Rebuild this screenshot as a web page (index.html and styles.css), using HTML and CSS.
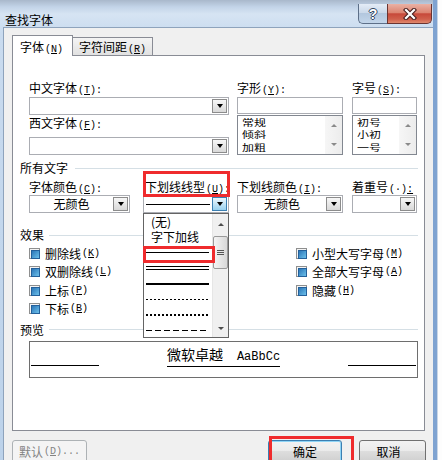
FILE: index.html
```html
<!DOCTYPE html>
<html lang="zh-CN">
<head>
  <meta charset="UTF-8" />
  <title>查找字体</title>
  <link rel="stylesheet" href="styles.css">
</head>
<body>
  <div class="screen">
    <div class="window">
      <div class="titlebar">
        <span class="title">查找字体</span>
        <div class="caption">
          <div class="cap help"><span>?</span></div>
          <div class="cap close">
            <svg width="14" height="12" viewBox="0 0 14 12">
              <path d="M3 2 L11 10 M11 2 L3 10" stroke="#4a2020" stroke-width="4.4" stroke-linecap="square" fill="none"/>
              <path d="M3 2 L11 10 M11 2 L3 10" stroke="#fff" stroke-width="2.2" stroke-linecap="square" fill="none"/>
            </svg>
          </div>
        </div>
      </div>

      <div class="client">
        <div class="tabs">
          <div class="tab active">字体<span class="key">(<u>N</u>)</span></div>
          <div class="tab">字符间距<span class="key">(<u>R</u>)</span></div>
        </div>

        <div class="panel">
          <!-- font name / style / size -->
          <div class="fonts">
            <div class="col-name">
              <span class="lbl">中文字体<span class="key">(<u>T</u>):</span></span>
              <div class="combo"><span class="val"></span><span class="drop"></span></div>
              <span class="lbl lbl-second">西文字体<span class="key">(<u>F</u>):</span></span>
              <div class="combo combo-low"><span class="val"></span><span class="drop"></span></div>
            </div>
            <div class="col-style">
              <span class="lbl">字形<span class="key">(<u>Y</u>):</span></span>
              <div class="textbox"></div>
              <div class="listbox">
                <div class="items">
                  <div>常规</div>
                  <div>倾斜</div>
                  <div>加粗</div>
                </div>
                <div class="vscroll"><span class="up"></span><span class="down"></span></div>
              </div>
            </div>
            <div class="col-size">
              <span class="lbl">字号<span class="key">(<u>S</u>):</span></span>
              <div class="textbox"></div>
              <div class="listbox">
                <div class="items">
                  <div>初号</div>
                  <div>小初</div>
                  <div>一号</div>
                </div>
                <div class="vscroll"><span class="up"></span><span class="down"></span></div>
              </div>
            </div>
          </div>

          <div class="group group-all">所有文字</div>
          <div class="attrs">
            <div class="attr-color">
              <span class="lbl">字体颜色<span class="key">(<u>C</u>):</span></span>
              <div class="combo combo-attr"><span class="val">无颜色</span><span class="drop"></span></div>
            </div>
            <div class="attr-line">
              <span class="lbl lbl-line">下划线线型<span class="key">(<u>U</u>):</span></span>
              <div class="combo combo-attr combo-open"><span class="val"><span class="sample"></span></span><span class="drop drop-hot"></span></div>
            </div>
            <div class="attr-ucolor">
              <span class="lbl">下划线颜色<span class="key">(<u>I</u>):</span></span>
              <div class="combo combo-attr"><span class="val">无颜色</span><span class="drop"></span></div>
            </div>
            <div class="attr-emph">
              <span class="lbl">着重号<span class="key">(·)<u>:</u></span></span>
              <div class="combo combo-attr"><span class="val"></span><span class="drop"></span></div>
            </div>
          </div>

          <div class="group group-fx">效果</div>
          <div class="effects">
            <div class="fx-col">
              <div class="check"><span class="box"></span>删除线<span class="key">(<u>K</u>)</span></div>
              <div class="check"><span class="box"></span>双删除线<span class="key">(<u>L</u>)</span></div>
              <div class="check"><span class="box"></span>上标<span class="key">(<u>P</u>)</span></div>
              <div class="check"><span class="box"></span>下标<span class="key">(<u>B</u>)</span></div>
            </div>
            <div class="fx-col fx-right">
              <div class="check"><span class="box"></span>小型大写字母<span class="key">(<u>M</u>)</span></div>
              <div class="check"><span class="box"></span>全部大写字母<span class="key">(<u>A</u>)</span></div>
              <div class="check"><span class="box"></span>隐藏<span class="key">(<u>H</u>)</span></div>
            </div>
          </div>

          <div class="group group-preview">预览</div>
          <div class="preview">
            <span class="rule"></span>
            <span class="sample-text">微软卓越<span class="latin">AaBbCc</span></span>
            <span class="rule"></span>
          </div>

          <!-- open underline style list -->
          <div class="popup">
            <div class="popup-list">
              <div class="opt"><span class="opt-text">(无)</span></div>
              <div class="opt"><span class="opt-text">字下加线</span></div>
              <div class="opt"><span class="stroke solid"></span></div>
              <div class="opt"><span class="stroke double"></span></div>
              <div class="opt"><span class="stroke thick"></span></div>
              <div class="opt"><span class="stroke fine-dash"></span></div>
              <div class="opt"><span class="stroke dots"></span></div>
              <div class="opt"><span class="stroke long-dash"></span></div>
            </div>
            <div class="popup-scroll">
              <span class="sb-btn"><span class="up"></span></span>
              <span class="thumb"><span class="grip"></span></span>
              <span class="sb-btn sb-bottom"><span class="down"></span></span>
            </div>
          </div>

          <div class="mark mark-label"></div>
          <div class="mark mark-item"></div>
        </div>

        <div class="buttons">
          <div class="btn btn-off">默认<span class="key">(<u>D</u>)...</span></div>
          <div class="btn btn-ok">确定</div>
          <div class="btn btn-cancel">取消</div>
          <div class="mark mark-ok"></div>
        </div>
      </div>
    </div>
    <div class="behind"></div>
  </div>
</body>
</html>
```

FILE: styles.css
```css
* {
  box-sizing: border-box;
}
body {
  margin: 0;
  width: 442px;
  height: 460px;
  overflow: hidden;
  background: #fff;
  color: #000;
  font-family: "Noto Sans CJK SC", "Liberation Sans", sans-serif;
  font-size: 12px;
}
.screen {
  display: flex;
  height: 460px;
}
.window {
  width: 437px;
  flex: none;
  display: flex;
  flex-direction: column;
  padding-left: 3px;
  border-right: 4px solid #7fa3d1;
  background: linear-gradient(180deg, #a9b8cb 0, #c3d4e8 7px, #d6e4f3 14px, #c9dbef 33px, #bcd2ea 100%);
}
.behind {
  flex: 1;
  background: #fdfdfd;
  border-left: 1px solid #c9d6e6;
}

/* title bar */
.titlebar {
  height: 33px;
  display: flex;
  align-items: flex-start;
  padding: 0 1px 0 2px;
}
.title {
  margin-top: 13px;
  line-height: 14px;
}
.caption {
  margin-left: auto;
  margin-top: 4px;
  display: flex;
}
.cap {
  height: 20px;
  display: flex;
  align-items: center;
  justify-content: center;
  border: 1px solid #5d6f88;
  border-top: none;
}
.help {
  width: 29px;
  border-right: none;
  border-bottom-left-radius: 5px;
  background: linear-gradient(180deg, #e4ecf6 0, #cbd9ea 45%, #b3c7de 50%, #c2d5ea 100%);
}
.help span {
  font-family: "Liberation Sans", sans-serif;
  font-weight: bold;
  font-size: 14px;
  color: #fff;
  text-shadow: 1px 0 #34465f, -1px 0 #34465f, 0 1px #34465f, 0 -1px #34465f;
}
.close {
  width: 45px;
  border-color: #6a3431;
  border-bottom-right-radius: 5px;
  background: linear-gradient(180deg, #eab1a4 0, #dc8572 45%, #c7493a 52%, #d0604c 80%, #e0896e 100%);
}

/* client area */
.client {
  flex: 1;
  background: #f0f0f0;
  border-left: 1px solid #8ea3bc;
  border-top: 1px solid #8ea3bc;
  padding: 7px 8px 0 8px;
}
.key {
  font-family: "Liberation Mono", monospace;
  font-size: 10px;
  margin-left: 1px;
}
.tabs {
  display: flex;
  align-items: flex-end;
  height: 20px;
  position: relative;
  z-index: 1;
}
.tab {
  width: 80px;
  height: 18px;
  border: 1px solid #898c95;
  border-left: none;
  border-bottom: none;
  padding: 2px 0 0 6px;
  line-height: 14px;
  background: linear-gradient(180deg, #f4f4f4, #e1e1e1);
}
.tab.active {
  width: 61px;
  height: 21px;
  margin-bottom: -1px;
  border-left: 1px solid #898c95;
  padding: 4px 0 0 7px;
  background: #fff;
}
.panel {
  position: relative;
  height: 376px;
  border: 1px solid #898c95;
  background: #fff;
  padding: 25px 6px 0 7px;
}
.lbl {
  display: block;
  height: 14px;
  line-height: 14px;
  white-space: nowrap;
}

/* font name/style/size */
.fonts {
  display: flex;
  margin-left: 9px;
}
.col-name {
  width: 200px;
  flex: none;
}
.col-style {
  width: 106px;
  flex: none;
  margin-left: 8px;
}
.col-size {
  width: 65px;
  flex: none;
  margin-left: 9px;
}
.lbl-second {
  margin-top: 1px;
}
.combo {
  height: 18px;
  margin-top: 2px;
  border: 1px solid #abadb3;
  background: #fff;
  display: flex;
  align-items: center;
}
.combo-low {
  margin-top: 7px;
}
.combo-attr {
  margin-top: 1px;
}
.combo .val {
  flex: 1;
  line-height: 14px;
  text-align: center;
}
.drop {
  width: 15px;
  height: 14px;
  margin-right: 1px;
  border: 1px solid #8c8c8c;
  background: linear-gradient(180deg, #f7f7f7, #d9d9d9);
  display: flex;
  align-items: center;
  justify-content: center;
}
.drop::after {
  content: "";
  border-left: 3px solid transparent;
  border-right: 3px solid transparent;
  border-top: 4px solid #000;
}
.drop-hot {
  border-color: #3c7fb1;
  background: linear-gradient(180deg, #eaf6fd, #c4e5f6 50%, #98d1ef);
}
.combo-open .val {
  display: flex;
  padding-left: 2px;
}
.sample {
  width: 64px;
  height: 1px;
  background: #000;
}
.textbox {
  height: 17px;
  margin-top: 2px;
  border: 1px solid #abadb3;
}
.listbox {
  height: 40px;
  margin-top: 1px;
  border: 1px solid #828790;
  display: flex;
  overflow: hidden;
}
.listbox .items {
  flex: 1;
  padding: 0 0 0 4px;
  line-height: 17px;
  transform: scaleY(0.72);
  transform-origin: 0 0;
}
.vscroll {
  width: 17px;
  background: linear-gradient(90deg, #f6f6f6, #ececec);
  display: flex;
  flex-direction: column;
  justify-content: space-around;
  align-items: center;
}
.up, .down {
  width: 0;
  height: 0;
  border-left: 3px solid transparent;
  border-right: 3px solid transparent;
}
.up {
  border-bottom: 3px solid #8a8a8a;
}
.down {
  border-top: 3px solid #8a8a8a;
}

/* group headers */
.group {
  display: flex;
  align-items: center;
  height: 14px;
  line-height: 14px;
}
.group::after {
  content: "";
  flex: 1;
  height: 1px;
  margin-left: 7px;
  background: #d5dfe5;
}
.group-all {
  margin-top: 6px;
}
.group-fx {
  margin-top: 15px;
}
.group-fx::after {
  margin-left: 5px;
}
.group-preview {
  margin-top: 4.5px;
}
.group-preview::after {
  margin-left: 5px;
}

/* all text row */
.attrs {
  display: flex;
  margin: 5px 0 0 9px;
}
.attr-color {
  width: 101px;
  flex: none;
}
.attr-line {
  width: 86px;
  flex: none;
  margin-left: 13px;
}
.lbl-line {
  padding-left: 2px;
}
.attr-ucolor {
  width: 106px;
  flex: none;
  margin-left: 8px;
}
.attr-emph {
  width: 65px;
  flex: none;
  margin-left: 9px;
}

/* effects */
.effects {
  display: flex;
  margin: 2px 0 0 9px;
}
.fx-col {
  width: 267px;
  flex: none;
}
.fx-right {
  width: auto;
  flex: 1;
}
.check {
  display: flex;
  align-items: center;
  height: 18.5px;
  white-space: nowrap;
}
.box {
  width: 11px;
  height: 11px;
  margin-right: 5px;
  border: 1px solid #8e8f8f;
  padding: 1px;
  background: #f4f4f4;
}
.box::after {
  content: "";
  display: block;
  width: 7px;
  height: 7px;
  border: 1px solid #24609a;
  background: linear-gradient(135deg, #2b76b8, #6cc0ea);
}

/* preview */
.preview {
  height: 37px;
  margin: 4.5px 0 0 9px;
  border: 1px solid #6e6e6e;
  display: flex;
  align-items: flex-end;
  justify-content: space-between;
  padding: 0 1px 11px 1px;
}
.rule {
  width: 68px;
  height: 1px;
  background: #000;
}
.sample-text {
  font-size: 14px;
  line-height: 14px;
  padding-bottom: 2px;
  border-bottom: 1px solid #000;
  margin-bottom: -1px;
}
.latin {
  font-family: "Liberation Mono", monospace;
  font-size: 12px;
  margin-left: 14px;
}

/* open underline list */
.popup {
  position: absolute;
  left: 130px;
  top: 157px;
  width: 86px;
  height: 125px;
  border: 1px solid #646464;
  background: #fff;
  display: flex;
  z-index: 2;
}
.popup-list {
  flex: 1;
  overflow: hidden;
}
.opt {
  height: 15.5px;
  display: flex;
  align-items: center;
  padding-left: 2px;
}
.opt-text {
  padding-left: 5px;
  line-height: 14px;
  white-space: nowrap;
}
.stroke {
  width: 63px;
}
.solid {
  height: 1px;
  background: #000;
}
.double {
  height: 4px;
  border-top: 1px solid #000;
  border-bottom: 1px solid #000;
}
.thick {
  height: 2px;
  background: #000;
}
.fine-dash {
  height: 1px;
  background: repeating-linear-gradient(90deg, #000 0 2px, transparent 2px 4px);
}
.dots {
  height: 2px;
  background: repeating-linear-gradient(90deg, #000 0 2px, transparent 2px 4px);
}
.long-dash {
  height: 1px;
  background: repeating-linear-gradient(90deg, #000 0 6px, transparent 6px 9px);
}
.popup-scroll {
  width: 16px;
  background: #f0f0f0;
  border-left: 1px solid #e6e6e6;
  display: flex;
  flex-direction: column;
  align-items: center;
}
.sb-btn {
  height: 20px;
  width: 100%;
  display: flex;
  align-items: center;
  justify-content: center;
}
.sb-btn .up {
  border-bottom-color: #4d4d4d;
}
.sb-btn .down {
  border-top-color: #4d4d4d;
}
.sb-bottom {
  height: 17px;
  margin-top: auto;
}
.thumb {
  width: 15px;
  height: 33px;
  margin-top: 2px;
  border: 1px solid #9a9a9a;
  border-radius: 2px;
  background: linear-gradient(90deg, #f4f4f4, #d8d8d8);
  display: flex;
  align-items: center;
  justify-content: center;
}
.grip {
  width: 7px;
  height: 5px;
  border-top: 1px solid #555;
  border-bottom: 1px solid #555;
  background: linear-gradient(180deg, transparent 1px, #555 1px, #555 2px, transparent 2px);
}

/* red annotation boxes */
.mark {
  position: absolute;
  border: 3px solid #ef2b2d;
  z-index: 3;
}
.mark-label {
  left: 130px;
  top: 115px;
  width: 87px;
  height: 26px;
}
.mark-item {
  left: 130px;
  top: 190px;
  width: 72px;
  height: 17px;
}

/* dialog buttons */
.buttons {
  position: relative;
  display: flex;
  margin-top: 9px;
}
.btn {
  height: 23px;
  flex: none;
  border: 1px solid #707070;
  border-radius: 3px;
  background: linear-gradient(180deg, #f2f2f2 0, #ebebeb 45%, #dddddd 50%, #cfcfcf 100%);
  display: flex;
  align-items: center;
  justify-content: center;
  line-height: 14px;
  white-space: nowrap;
}
.btn-off {
  width: 75px;
  border-color: #adb2b5;
  background: #f4f4f4;
  color: #838383;
}
.btn-ok {
  width: 74px;
  margin-left: 181px;
  border-color: #3c7fb1;
  box-shadow: inset 0 0 0 1px #8ed4f6;
}
.btn-cancel {
  width: 67px;
  margin-left: 17px;
  padding-right: 8px;
}
.mark-ok {
  left: 257px;
  top: -4px;
  width: 85px;
  height: 30px;
}
```
